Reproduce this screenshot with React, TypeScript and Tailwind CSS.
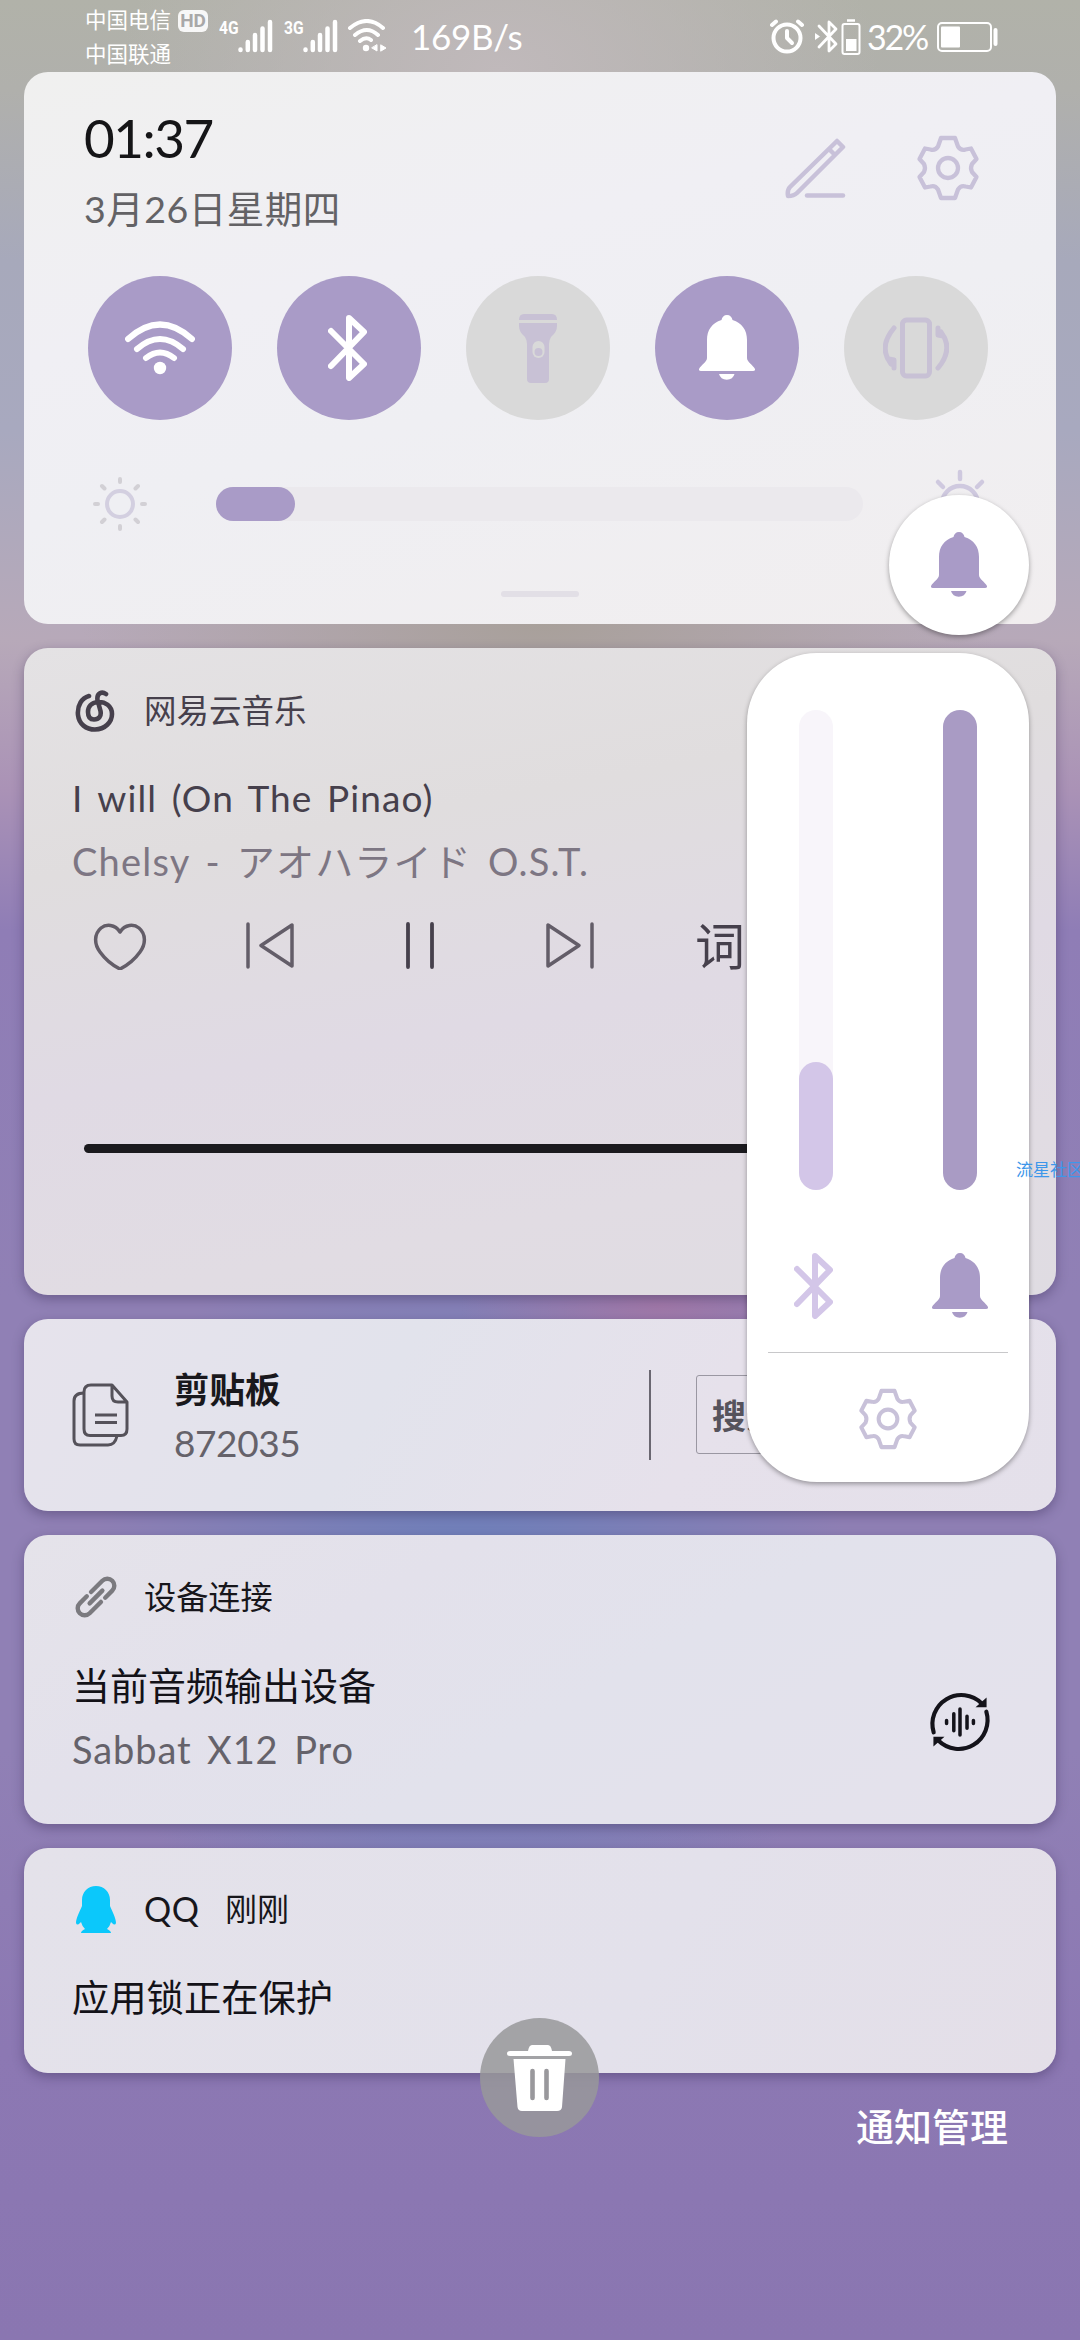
import type { ReactNode } from "react"

function Bell({ className }: { className?: string }) {
  return (
    <svg viewBox="0 0 56 66" className={className} fill="currentColor">
      <path d="M28 0c3 0 5 2 5.500 5C43 8 48 15 48 25V43C48 47 54 50 56 54Q56.500 56 54 56H2Q-.5 56 0 54C2 50 8 47 8 43V25C8 15 13 8 22.500 5C23 2 25 0 28 0Z" />
      <path d="M20 59H35.500A8 7.500 0 0 1 20 59Z" />
    </svg>
  )
}

function Bluetooth({ className }: { className?: string }) {
  return (
    <svg viewBox="0 0 39 66" className={className} fill="none" stroke="currentColor" strokeWidth="6" strokeLinecap="round" strokeLinejoin="round">
      <path d="M3 16L36 49L21 63V3L36 17L3 51" />
    </svg>
  )
}

function Gear({ className }: { className?: string }) {
  return (
    <svg viewBox="-32 -33 64 66" className={className} fill="none" stroke="currentColor" strokeWidth="4.300" strokeLinejoin="round">
      <path d="M-7 -30H7L10 -21.500Q13 -17 17.500 -18.500L23 -19.500L28.500 -9L24 -4Q22 0 24 4L28.500 9L23 19.500L17.500 18.500Q13 17 10 21.500L7 30H-7L-10 21.500Q-13 17 -17.500 18.500L-23 19.500L-28.500 9L-24 4Q-22 0 -24 -4L-28.500 -9L-23 -19.500L-17.500 -18.500Q-13 -17 -10 -21.500Z" />
      <circle r="10" />
    </svg>
  )
}

function Signal() {
  return (
    <svg viewBox="0 0 35 34" className="h-[34px] w-[35px]" stroke="white" strokeWidth="4.500" strokeLinecap="round">
      <path d="M2.500 30.500V31M9.800 23V31M17 16V31M24.500 9.500V31M32 3V31" />
    </svg>
  )
}

function StatusBar() {
  return (
    <div className="flex h-[72px] text-white">
      <div className="ml-[85px] flex w-[134px] flex-col pt-[7px] text-[21.500px] leading-[27px]">
        <div className="flex items-center gap-[7px] whitespace-nowrap">
          中国电信
          <span className="h-[22px] w-[30px] rounded-[6px] bg-white/90 text-center font-['Roboto'] text-[19px] font-bold leading-[22px] text-[#a9a8a8]">
            HD
          </span>
        </div>
        <div className="mt-[7px]">中国联通</div>
      </div>
      <div className="flex h-[54px] pt-[19px]">
        <span className="w-[19px] origin-left scale-x-[0.82] font-['Roboto'] text-[19px] font-bold leading-[17px]">4G</span>
        <Signal />
        <span className="ml-[11px] w-[19px] origin-left scale-x-[0.82] font-['Roboto'] text-[19px] font-bold leading-[17px]">3G</span>
        <Signal />
        <svg viewBox="0 0 40 33" className="ml-[9px] h-[33px] w-[40px]" fill="none" stroke="white" strokeWidth="4" strokeLinecap="round">
          <path d="M3 9Q20 -5 36 9M8 16Q20 6 31 16M13 22Q19 17 24 21" />
          <circle cx="19" cy="29" r="3.200" fill="white" stroke="none" />
          <path d="M30 26V32L25 29ZM34 26L39 29L34 32Z" fill="white" stroke="white" strokeWidth="1" />
        </svg>
      </div>
      <span className="ml-[24px] mt-[13px] whitespace-nowrap text-[35px] leading-[46px] tracking-[-0.300px]">169B/s</span>
      <div className="ml-auto mr-[82px] flex h-[73px] items-center">
        <svg viewBox="0 0 34 35" className="mr-[11px] h-[35px] w-[34px]" fill="none" stroke="white" strokeWidth="4" strokeLinecap="round" strokeLinejoin="round">
          <circle cx="17" cy="19" r="13.500" />
          <path d="M17 12V19L22 24" />
          <path d="M2 6L6 2.500M32 6L28 2.500" />
        </svg>
        <svg viewBox="0 0 24 35" className="h-[35px] w-[24px]" fill="none" stroke="white" strokeWidth="2.800" strokeLinejoin="round" strokeLinecap="round">
          <path d="M4 7L21 25L14 32V3L21 10L4 28" />
          <path d="M0 14L5 17.500L0 21Z" fill="white" stroke="none" />
        </svg>
        <svg viewBox="0 0 20 36" className="ml-[2px] h-[36px] w-[20px]" fill="none" stroke="white" strokeWidth="2">
          <path d="M6 1.500H14" strokeWidth="2.500" />
          <rect x="1.500" y="5" width="17" height="30" rx="2" />
          <rect x="5" y="20" width="10.500" height="12" fill="white" stroke="none" />
        </svg>
        <span className="ml-[6px] w-[69px] whitespace-nowrap text-[34px] leading-[46px] tracking-[-2.200px]">32%</span>
        <svg viewBox="0 0 62 30" className="h-[30px] w-[62px]" fill="none" stroke="white" strokeWidth="2">
          <rect x="2" y="1" width="53" height="28" rx="4" />
          <rect x="5" y="4.500" width="19" height="21" rx="1" fill="white" stroke="none" />
          <rect x="57.500" y="6" width="4" height="18" rx="2" fill="white" stroke="none" />
        </svg>
      </div>
    </div>
  )
}

function Toggle({ on, children }: { on?: boolean; children: ReactNode }) {
  return (
    <div
      className={
        on
          ? "flex size-36 items-center justify-center rounded-full bg-[#a99bc7] text-white"
          : "flex size-36 items-center justify-center rounded-full bg-[#d9d9d9] text-[#c8c1d5]"
      }
    >
      {children}
    </div>
  )
}

function QuickPanel() {
  return (
    <section className="mx-6 h-[552px] rounded-[24px] bg-[linear-gradient(165deg,#f0f0ef_0%,#f0eff4_35%,#efeff3_55%,#f1eeef_100%)] pt-[36px]">
      <div className="flex justify-between pl-[60px]">
        <div>
          <div className="text-[53px] leading-[60px] tracking-[-1.500px] text-[#151517]">01:37</div>
          <div className="mt-[17px] text-[37.500px] leading-[48px] tracking-[0.500px] text-[#636265]">3月26日星期四</div>
        </div>
        <div className="flex pt-[27px] text-[#c8c1d9]">
          <svg viewBox="0 0 62 62" className="mt-[3px] h-[62px] w-[62px]" fill="none" stroke="currentColor" strokeWidth="4.500" strokeLinejoin="round" strokeLinecap="round">
            <path d="M52 3L58 9L12 55Q9 58 3 58Q2 52 5 49ZM44 11L50 17" />
            <path d="M22 57.500H58" />
          </svg>
          <Gear className="ml-[69px] mr-[76px] h-[66px] w-[64px]" />
        </div>
      </div>
      <div className="mt-[43px] flex gap-[45px] pl-[64px]">
        <Toggle on>
          <svg viewBox="0 0 70 54" className="h-[54px] w-[70px]" fill="none" stroke="currentColor" strokeWidth="6" strokeLinecap="round">
            <path d="M3 18Q35 -11 67 18M12 28Q35 8 58 28M21 37Q35 26 49 37" />
            <circle cx="35" cy="47" r="6.200" fill="currentColor" stroke="none" />
          </svg>
        </Toggle>
        <Toggle on>
          <Bluetooth className="mr-[3px] h-[66px] w-[39px]" />
        </Toggle>
        <Toggle>
          <svg viewBox="0 0 38 69" className="h-[69px] w-[38px]" fill="currentColor">
            <path d="M5 0H33Q38 0 38 6H0Q0 0 5 0ZM0 9H38V12Q38 18 32 23Q30 26 30 30V65Q30 69 26 69H12Q8 69 8 65V30Q8 26 6 23Q0 18 0 12Z" />
            <rect x="13.500" y="27" width="12" height="17" rx="6" fill="#d9d9d9" />
            <circle cx="19.500" cy="38" r="4" />
          </svg>
        </Toggle>
        <Toggle on>
          <Bell className="h-[66px] w-[56px]" />
        </Toggle>
        <Toggle>
          <svg viewBox="0 0 66 62" className="h-[62px] w-[66px]" fill="none" stroke="currentColor" strokeWidth="5" strokeLinecap="round" strokeLinejoin="round">
            <rect x="19.500" y="3" width="27" height="56" rx="4" />
            <path d="M11 11Q-5 30 8 47M55 11V18L60 19M55 51Q71 32 58 15M11 51V43L6 42" />
          </svg>
        </Toggle>
      </div>
      <div className="mt-[52px] flex h-16 items-center pl-[64px]">
        <svg viewBox="-32 -32 64 64" className="size-16" fill="none" stroke="#d3cfe0" strokeLinecap="round">
          <circle r="13" strokeWidth="4" />
          <path strokeWidth="4" stroke="#d2d0d5" d="M0 -22V-25M0 22V25M-22 0H-25M22 0H25M-15.500 -15.500L-18 -18M15.500 -15.500L18 -18M-15.500 15.500L-18 18M15.500 15.500L18 18" />
        </svg>
        <div className="ml-[64px] h-[34px] w-[647px] rounded-full bg-[#ebe9ed]">
          <div className="h-full w-[79px] rounded-full bg-[#a99bc7]" />
        </div>
        <svg viewBox="-36 -36 72 72" className="ml-[61px] size-[72px] shrink-0" fill="none" stroke="#cfc9df" strokeWidth="4.500" strokeLinecap="round">
          <circle r="18" />
          <path d="M0 -25V-32M-17 -17L-22 -22M17 -17L22 -22" />
        </svg>
      </div>
      <div className="mx-auto mt-[55px] h-[6px] w-[78px] rounded-full bg-[#e2dfe6]" />
    </section>
  )
}

function MusicCard() {
  return (
    <section className="mx-6 mt-6 h-[647px] rounded-[24px] bg-[linear-gradient(170deg,#e4e2e4_0%,#e0ddde_28%,#e0dae4_55%,#e1dce3_80%,#dfdce2_100%)] px-12 pt-[43px] text-[#46404c] shadow-[0_4px_12px_rgba(40,30,70,0.350)]">
      <div className="flex h-10 items-center">
        <svg viewBox="0 0 42 42" className="ml-[3px] h-[42px] w-[42px]" fill="none" stroke="currentColor" strokeWidth="4.600" strokeLinecap="round">
          <path d="M14 6C7 8 2 15 3 25C4 34 11 39.500 20 39.500C30 39.500 37 32 37 24C37 16 30 11.500 23 12C16 12.500 13 17 13 22C13 27 15 29.500 19 29.500C24 29.500 26.500 26 25.500 21L22.500 10C21.500 3 27 1 31 4" />
        </svg>
        <span className="ml-[27px] text-[32.500px] leading-10">网易云音乐</span>
      </div>
      <div className="mt-[43px] whitespace-nowrap text-[37px] leading-[48px] tracking-[1.100px] [word-spacing:4px]">I will (On The Pinao)</div>
      <div className="mt-[15px] whitespace-nowrap text-[38px] leading-[48px] tracking-[1.200px] text-[#7d7683] [word-spacing:5px]">
        Chelsy - アオハライド O.S.T.
      </div>
      <div className="ml-[18px] mt-[37px] flex h-12 items-center gap-[90px]">
        <svg viewBox="0 0 60 48" className="h-12 w-[60px] shrink-0" fill="none" stroke="#635d68" strokeWidth="3.500" strokeLinejoin="round">
          <path d="M30 10C25 2 16 2 11 6C4 12 4 22 10 30C15 37 22 43 30 47C38 43 45 37 50 30C56 22 56 12 49 6C44 2 35 2 30 10Z" />
        </svg>
        <svg viewBox="0 0 60 48" className="h-12 w-[60px] shrink-0" fill="none" stroke="#635d68" strokeWidth="3.500" strokeLinejoin="round" strokeLinecap="round">
          <path d="M8 2V45M52 3V44L21 23.500Z" />
        </svg>
        <svg viewBox="0 0 60 48" className="h-12 w-[60px] shrink-0" stroke="currentColor" strokeWidth="3.800" strokeLinecap="round">
          <path d="M18 2V45M42 2V45" />
        </svg>
        <svg viewBox="0 0 60 48" className="h-12 w-[60px] shrink-0" fill="none" stroke="#635d68" strokeWidth="3.500" strokeLinejoin="round" strokeLinecap="round">
          <path d="M52 2V45M8 3V44L39 23.500Z" />
        </svg>
        <span className="w-[60px] shrink-0 text-center text-[50px] leading-[48px]">词</span>
      </div>
      <div className="ml-3 mt-[174px] h-[9px] rounded-full bg-[#1b1a1e]" />
    </section>
  )
}

function ClipboardCard() {
  return (
    <section className="mx-6 mt-6 flex h-[192px] rounded-[24px] bg-[linear-gradient(120deg,#e6e3ec_0%,#e2e3ec_35%,#e6e1eb_65%,#e4e0ea_100%)] pl-12 shadow-[0_4px_12px_rgba(40,30,70,0.350)]">
      <svg viewBox="0 0 57 64" className="mt-16 h-[64px] w-[57px]" fill="none" stroke="#55525a" strokeWidth="3" strokeLinejoin="round">
        <path d="M19 2H40L55 19V46Q55 52.500 49 52.500H18Q12 52.500 12 46V9Q12 2 19 2ZM40 2V13Q40 19 46 19H55" />
        <path d="M12 10Q2 10 2 18V56Q2 62 8 62H36Q43 62 45 53M23 32H45M23 39.500H45" />
      </svg>
      <div className="ml-[45px] w-[475px] pt-[48px]">
        <div className="text-[35.500px] font-bold leading-[46px] text-[#19181c]">剪贴板</div>
        <div className="mt-[7px] text-[37px] leading-[46px] tracking-[-0.400px] text-[#65626a]">872035</div>
      </div>
      <div className="mt-[51px] h-[90px] w-[2px] bg-[#6a6771]" />
      <div className="ml-[45px] mt-[56px] h-[79px] w-[130px] rounded-[3px] border border-[#9a97a2] pl-[15px] text-[34px] font-bold leading-[80px] text-[#56535c]">
        搜索
      </div>
    </section>
  )
}

function DeviceCard() {
  return (
    <section className="mx-6 mt-6 flex h-[289px] justify-between rounded-[24px] bg-[linear-gradient(150deg,#e5e3ea_0%,#e3e1eb_30%,#e2e2ec_55%,#e5e2ec_100%)] px-12 pt-[42px] shadow-[0_4px_12px_rgba(40,30,70,0.350)]">
      <div>
        <div className="flex h-10 items-center">
          <svg viewBox="-22 -22 44 44" className="ml-[2px] size-[44px]" fill="none" stroke="#7b7a7f" strokeWidth="4.400" strokeLinecap="round">
            <g transform="rotate(-45)">
              <path d="M0 -7H16A7 7 0 0 1 16 7H6M0 7H-16A7 7 0 0 1 -16 -7H-6M-9 0H9" />
            </g>
          </svg>
          <span className="ml-[26px] text-[32.200px] leading-10 text-[#17161b]">设备连接</span>
        </div>
        <div className="mt-[44px] text-[38px] leading-[48px] text-[#131218]">当前音频输出设备</div>
        <div className="mt-[16px] whitespace-nowrap text-[38px] leading-[48px] tracking-[0.900px] text-[#65626a] [word-spacing:5px]">Sabbat X12 Pro</div>
      </div>
      <svg viewBox="-31 -31 62 62" className="mr-4 mt-[113px] size-16" fill="none" stroke="#14131a" strokeWidth="4" strokeLinecap="round">
        <path d="M-25.500 10A28 28 0 0 1 21 -18M25.500 -10A28 28 0 0 1 -21 18" />
        <path d="M25 -22V-15H17ZM-25 22V15H-17Z" fill="#14131a" strokeWidth="1.500" />
        <path strokeWidth="3.400" d="M-13 -1.500V1.500M-6 -8V8.500M0 -12.500V12.500M6.800 -5.500V6M13 -1.500V1.500" />
      </svg>
    </section>
  )
}

function QQCard() {
  return (
    <section className="mx-6 mt-6 h-[225px] rounded-[24px] bg-[linear-gradient(120deg,#e4e2ea_0%,#e3e1eb_60%,#e4dfe8_100%)] px-12 pt-[37px] shadow-[0_4px_12px_rgba(40,30,70,0.350)]">
      <div className="flex h-12 items-center text-[32px] leading-10 text-[#17161b]">
        <svg viewBox="0 0 40 47" className="ml-1 h-[47px] w-[40px]" fill="#0bc8fb">
          <path d="M20 0C28 0 34 6 34 14V20C36 25 40 32 40 37Q39 40 36 37L35 36Q34 40 31 43Q35 45 35 47H5Q5 45 9 43Q6 40 5 36L4 37Q1 40 0 37C0 32 4 25 6 20V14C6 6 12 0 20 0Z" />
        </svg>
        <span className="ml-[28px] w-[81px] text-[34px] tracking-[0.500px]">QQ</span>
        <span>刚刚</span>
      </div>
      <div className="mt-[41px] text-[37.300px] leading-[48px] text-[#131218]">应用锁正在保护</div>
    </section>
  )
}

function VolumePanel() {
  return (
    <div className="absolute left-[747px] top-[653px] h-[829px] w-[282px] rounded-[70px] bg-white pt-[57px] shadow-[0_2px_5px_rgba(0,0,0,0.350)]">
      <div className="flex gap-[110px] pl-[52px]">
        <div className="flex h-[480px] w-[34px] items-end rounded-full bg-[#f8f5fa]">
          <div className="h-[128px] w-full rounded-full bg-[#d3c6e8]" />
        </div>
        <div className="h-[480px] w-[34px] rounded-full bg-[#a99bc4]" />
      </div>
      <div className="mt-[63px] flex pl-[47px]">
        <Bluetooth className="h-[66px] w-[39px] text-[#d3c6e8]" />
        <Bell className="ml-[99px] h-[66px] w-[56px] text-[#a99bc7]" />
      </div>
      <div className="ml-[21px] mt-[33px] h-px w-[240px] bg-[#c8c8ca]" />
      <Gear className="mx-auto mt-[35px] h-[62px] w-[60px] text-[#c8c1d9]" />
    </div>
  )
}

export default function App() {
  return (
    <div className="relative h-[2340px] w-[1080px] overflow-hidden bg-[radial-gradient(ellipse_460px_190px_at_540px_620px,#a8a09a_0%,#a8a09a00_100%),radial-gradient(ellipse_380px_240px_at_500px_70px,#c0b9bb_0%,#c0b9bb00_100%),radial-gradient(ellipse_200px_90px_at_660px_1306px,#a078a8_0%,#a078a800_100%),radial-gradient(ellipse_380px_420px_at_470px_1600px,#6c80bb_0%,#6c80bb00_100%),linear-gradient(180deg,#b1b2a9_0px,#b0b0ac_90px,#a7a9bb_260px,#a8a9bf_430px,#b7a9b9_640px,#aa92b6_790px,#8f7db6_930px,#9080b5_1300px,#9080b5_1750px,#8c78b3_2050px,#8a76b1_2340px)] font-['Lato','Noto_Sans_CJK_SC',sans-serif]">
      <StatusBar />
      <QuickPanel />
      <MusicCard />
      <ClipboardCard />
      <DeviceCard />
      <QQCard />
      <div className="mr-[72px] mt-[29px] text-right text-[38px] font-medium leading-[48px] text-white">通知管理</div>

      <div className="absolute left-[480px] top-[2018px] flex size-[119px] items-center justify-center rounded-full bg-[#98989a]/85">
        <svg viewBox="0 0 65 66" className="mt-px h-[66px] w-[65px]" fill="white">
          <path d="M25 0H41Q44 0 45 6H62Q65 6 65 8.500T62 11H3Q0 11 0 8.500T3 6H21Q22 0 25 0ZM6.500 14H58.500L55 62Q54.500 66 50 66H15Q11 66 10.500 62Z" />
          <path d="M25.500 26V53M39.500 26V53" stroke="#99989c" strokeWidth="4.600" strokeLinecap="round" />
        </svg>
      </div>

      <div className="absolute left-[889px] top-[495px] flex size-[140px] items-center justify-center rounded-full bg-white text-[#a99bc7] shadow-[0_2px_5px_rgba(0,0,0,0.350)]">
        <Bell className="h-[66px] w-[56px]" />
      </div>
      <VolumePanel />
      <div className="absolute left-[1016px] top-[1160px] whitespace-nowrap text-[17px] leading-5 text-[#3d97ea]">流星社区</div>
    </div>
  )
}
